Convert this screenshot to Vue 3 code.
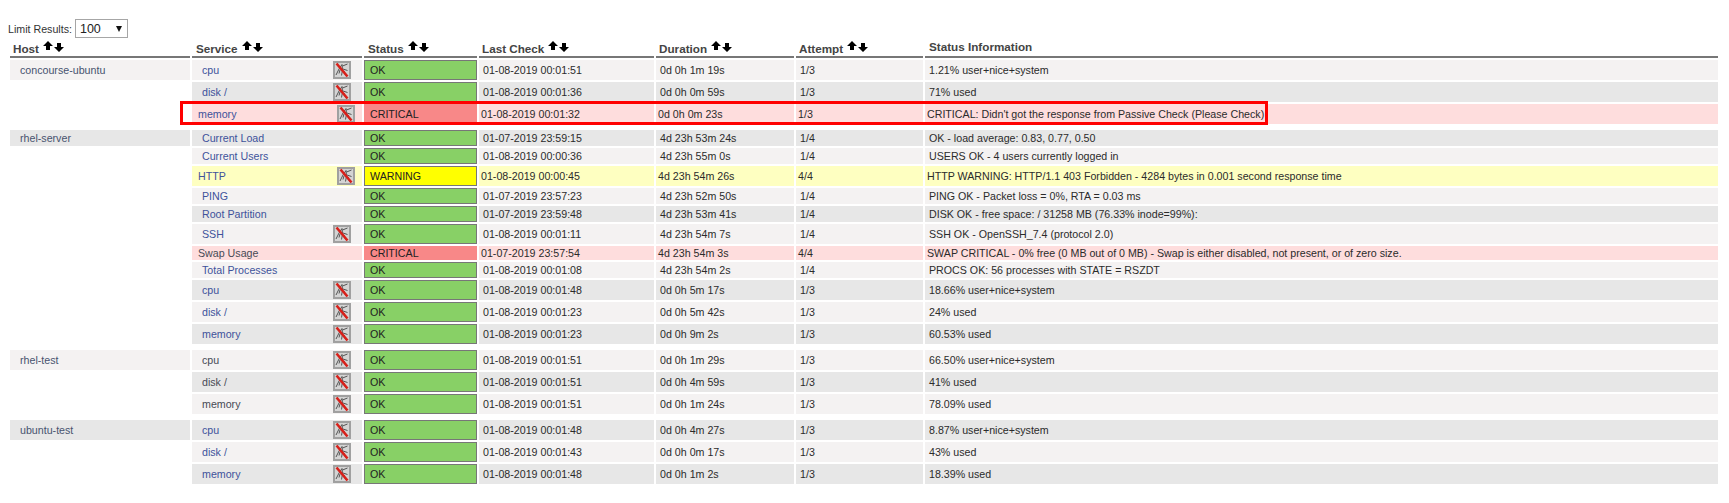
<script setup>
const columns = [
  { label: 'Host', cls: 'c-host' },
  { label: 'Service', cls: 'c-service' },
  { label: 'Status', cls: 'c-status' },
  { label: 'Last Check', cls: 'c-check' },
  { label: 'Duration', cls: 'c-duration' },
  { label: 'Attempt', cls: 'c-attempt' },
  { label: 'Status Information', cls: 'c-info', plain: true }
]

const r = (host, service, tone, state, check, duration, attempt, info, h, icon = true, hostTone = '', dim = false) => ({
  host, service, tone, state, check, duration, attempt, info, h, icon, hostTone, dim
})

const rows = [
  r('concourse-ubuntu', 'cpu', 'odd', 'OK', '01-08-2019 00:01:51', '0d 0h 1m 19s', '1/3', '1.21% user+nice+system', 20, true, 'odd'),
  r('', 'disk /', 'even', 'OK', '01-08-2019 00:01:36', '0d 0h 0m 59s', '1/3', '71% used', 20),
  r('', 'memory', 'crit', 'CRITICAL', '01-08-2019 00:01:32', '0d 0h 0m 23s', '1/3', "CRITICAL: Didn't got the response from Passive Check (Please Check)", 20),
  null,
  r('rhel-server', 'Current Load', 'even', 'OK', '01-07-2019 23:59:15', '4d 23h 53m 24s', '1/4', 'OK - load average: 0.83, 0.77, 0.50', 16, false, 'even'),
  r('', 'Current Users', 'odd', 'OK', '01-08-2019 00:00:36', '4d 23h 55m 0s', '1/4', 'USERS OK - 4 users currently logged in', 16, false),
  r('', 'HTTP', 'warn', 'WARNING', '01-08-2019 00:00:45', '4d 23h 54m 26s', '4/4', 'HTTP WARNING: HTTP/1.1 403 Forbidden - 4284 bytes in 0.001 second response time', 20),
  r('', 'PING', 'odd', 'OK', '01-07-2019 23:57:23', '4d 23h 52m 50s', '1/4', 'PING OK - Packet loss = 0%, RTA = 0.03 ms', 16, false),
  r('', 'Root Partition', 'even', 'OK', '01-07-2019 23:59:48', '4d 23h 53m 41s', '1/4', 'DISK OK - free space: / 31258 MB (76.33% inode=99%):', 16, false),
  r('', 'SSH', 'odd', 'OK', '01-08-2019 00:01:11', '4d 23h 54m 7s', '1/4', 'SSH OK - OpenSSH_7.4 (protocol 2.0)', 20),
  r('', 'Swap Usage', 'crit', 'CRITICAL', '01-07-2019 23:57:54', '4d 23h 54m 3s', '4/4', 'SWAP CRITICAL - 0% free (0 MB out of 0 MB) - Swap is either disabled, not present, or of zero size.', 14, false, '', true),
  r('', 'Total Processes', 'odd', 'OK', '01-08-2019 00:01:08', '4d 23h 54m 2s', '1/4', 'PROCS OK: 56 processes with STATE = RSZDT', 16, false),
  r('', 'cpu', 'even', 'OK', '01-08-2019 00:01:48', '0d 0h 5m 17s', '1/3', '18.66% user+nice+system', 20),
  r('', 'disk /', 'odd', 'OK', '01-08-2019 00:01:23', '0d 0h 5m 42s', '1/3', '24% used', 20),
  r('', 'memory', 'even', 'OK', '01-08-2019 00:01:23', '0d 0h 9m 2s', '1/3', '60.53% used', 20),
  null,
  r('rhel-test', 'cpu', 'odd', 'OK', '01-08-2019 00:01:51', '0d 0h 1m 29s', '1/3', '66.50% user+nice+system', 20, true, 'odd', true),
  r('', 'disk /', 'even', 'OK', '01-08-2019 00:01:51', '0d 0h 4m 59s', '1/3', '41% used', 20, true, '', true),
  r('', 'memory', 'odd', 'OK', '01-08-2019 00:01:51', '0d 0h 1m 24s', '1/3', '78.09% used', 20, true, '', true),
  null,
  r('ubuntu-test', 'cpu', 'even', 'OK', '01-08-2019 00:01:48', '0d 0h 4m 27s', '1/3', '8.87% user+nice+system', 20, true, 'even'),
  r('', 'disk /', 'odd', 'OK', '01-08-2019 00:01:43', '0d 0h 0m 17s', '1/3', '43% used', 20),
  r('', 'memory', 'even', 'OK', '01-08-2019 00:01:48', '0d 0h 1m 2s', '1/3', '18.39% used', 20)
]
</script>

<template>
  <div class="page">
    <div class="limit">
      <label class="limit-label" for="limit">Limit Results:</label>
      <span class="select-wrap">
        <select id="limit" class="limit-select">
          <option>100</option>
        </select>
      </span>
    </div>

    <table class="status-table">
      <colgroup>
        <col v-for="c in columns" :key="c.label" :class="c.cls" />
      </colgroup>
      <thead>
        <tr>
          <th v-for="c in columns" :key="c.label" :class="[c.cls, { plain: c.plain }]">
            <span class="th-inner">
              <span>{{ c.label }}</span>
              <span v-if="!c.plain" class="arrows">
                <svg class="arrow up" width="10" height="9" viewBox="0 0 10 9"><path d="M5 0 10 5H7V9H3V5H0Z" /></svg>
                <svg class="arrow" width="10" height="9" viewBox="0 0 10 9"><path d="M5 9 10 4H7V0H3V4H0Z" /></svg>
              </span>
            </span>
          </th>
        </tr>
      </thead>
      <tbody>
        <template v-for="(row, i) in rows" :key="i">
          <tr v-if="row" :class="row.tone" :style="{ height: row.h + 'px' }">
            <td class="host" :class="row.hostTone">{{ row.host }}</td>
            <td class="service">
              <div class="service-inner">
                <span class="service-name" :class="{ dim: row.dim }">{{ row.service }}</span>
                <svg v-if="row.icon" class="ndis" width="18" height="18" viewBox="0 0 18 18">
                  <rect x="0" y="0" width="18" height="18" fill="#a0a0a0" />
                  <rect x="2" y="2" width="14" height="14" fill="#d4d4d4" />
                  <path d="M9 3.500 6 8l-3 6M9 3.500 9.500 9l-1 5.500M9.500 5l5-2M10 8l4.500 1.500M7 9l-1 3.500M11 10l1.500 4.500" stroke="#555" stroke-width="1" fill="none" />
                  <path d="M3.500 2.500 14.500 15.500" stroke="#d8201a" stroke-width="2.600" fill="none" />
                </svg>
              </div>
            </td>
            <td class="state" :class="'s-' + row.state.toLowerCase()">{{ row.state }}</td>
            <td class="cell">{{ row.check }}</td>
            <td class="cell">{{ row.duration }}</td>
            <td class="cell">{{ row.attempt }}</td>
            <td class="cell">{{ row.info }}</td>
          </tr>
          <tr v-else class="spacer"><td colspan="7"></td></tr>
        </template>
      </tbody>
    </table>

    <div class="highlight"></div>
  </div>
</template>

<style scoped>
.page {
  position: relative;
  height: 503px;
  box-sizing: border-box;
  padding: 19px 9px 0 8px;
  font-family: "Liberation Sans", Arial, sans-serif;
  font-size: 10.670px;
  color: #2b2b2b;
  background: #fff;
}
.limit {
  display: flex;
  align-items: center;
  height: 19px;
  gap: 3px;
}
.limit-label {
  color: #333;
}
.select-wrap {
  position: relative;
  display: block;
  width: 53px;
  height: 19px;
}
.select-wrap::after {
  content: "";
  position: absolute;
  left: 41px;
  top: 7px;
  border-left: 3.500px solid transparent;
  border-right: 3.500px solid transparent;
  border-top: 6px solid #111;
}
.limit-select {
  appearance: none;
  display: block;
  width: 100%;
  height: 100%;
  box-sizing: border-box;
  margin: 0;
  padding: 0 0 0 4px;
  border: 1px solid #a6a6a6;
  border-radius: 0;
  background: #fff;
  font-family: "Liberation Sans", Arial, sans-serif;
  font-size: 12.500px;
  color: #222;
}
.status-table {
  table-layout: fixed;
  width: 1712px;
  border-collapse: separate;
  border-spacing: 2px;
}
.c-host { width: 180px; }
.c-service { width: 170px; }
.c-status { width: 113px; }
.c-check { width: 175px; }
.c-duration { width: 138px; }
.c-attempt { width: 127px; }
.c-info { width: 793px; }
th {
  height: 18px;
  box-sizing: border-box;
  padding: 0 0 0 3px;
  border-bottom: 2px solid #777;
  text-align: left;
  vertical-align: bottom;
  font-size: 11.700px;
  font-weight: bold;
  color: #444;
  white-space: nowrap;
}
th.plain {
  padding-left: 4px;
}
th.plain .th-inner {
  position: relative;
  top: -2px;
}
th.c-service { padding-left: 4px; }
th.c-status { padding-left: 4px; }
.th-inner {
  display: inline-flex;
  align-items: flex-end;
  gap: 4px;
  line-height: 15px;
}
.arrows {
  display: inline-flex;
  align-items: flex-start;
  gap: 1px;
  height: 15px;
}
.arrow {
  display: block;
  margin-top: 2px;
}
.arrow.up {
  margin-top: 0;
}
.arrow path {
  fill: #000;
}
td {
  padding: 0;
  white-space: nowrap;
  vertical-align: middle;
  box-sizing: border-box;
}
.cell {
  padding-left: 4px;
}
.host {
  padding-left: 10px;
  color: #47536f;
}
.host.odd { background: #f4f2f2; }
.host.even { background: #e7e7e7; }
.odd .service, .odd .cell { background: #f4f2f2; }
.even .service, .even .cell { background: #e7e7e7; }
.crit .service, .crit .cell { background: #fedddd; }
.warn .service, .warn .cell { background: #feffc1; }
.crit .cell, .warn .cell { padding-left: 2px; }
.service-inner {
  display: flex;
  align-items: center;
  justify-content: space-between;
  padding: 0 11.500px 0 10px;
}
.crit .service-inner, .warn .service-inner {
  padding: 0 7.500px 0 6px;
}
.service-name {
  color: #40529b;
}
.service-name.dim {
  color: #474a55;
}
.ndis {
  display: block;
  flex: none;
}
.state {
  padding-left: 6px;
  color: #222;
}
.s-ok {
  background: #88d066;
  border: 1px solid #777;
  padding-left: 5px;
}
.s-warning {
  background: #ffff00;
  border: 1px solid #777;
  padding-left: 5px;
}
.s-critical {
  background: #f88888;
}
.spacer td {
  height: 2px;
  font-size: 0;
  line-height: 0;
}
.highlight {
  position: absolute;
  left: 180px;
  top: 101px;
  width: 1088px;
  height: 24px;
  box-sizing: border-box;
  border: 3px solid #f00;
  pointer-events: none;
}
</style>
<style>
html, body { margin: 0; background: #fff; }
</style>
